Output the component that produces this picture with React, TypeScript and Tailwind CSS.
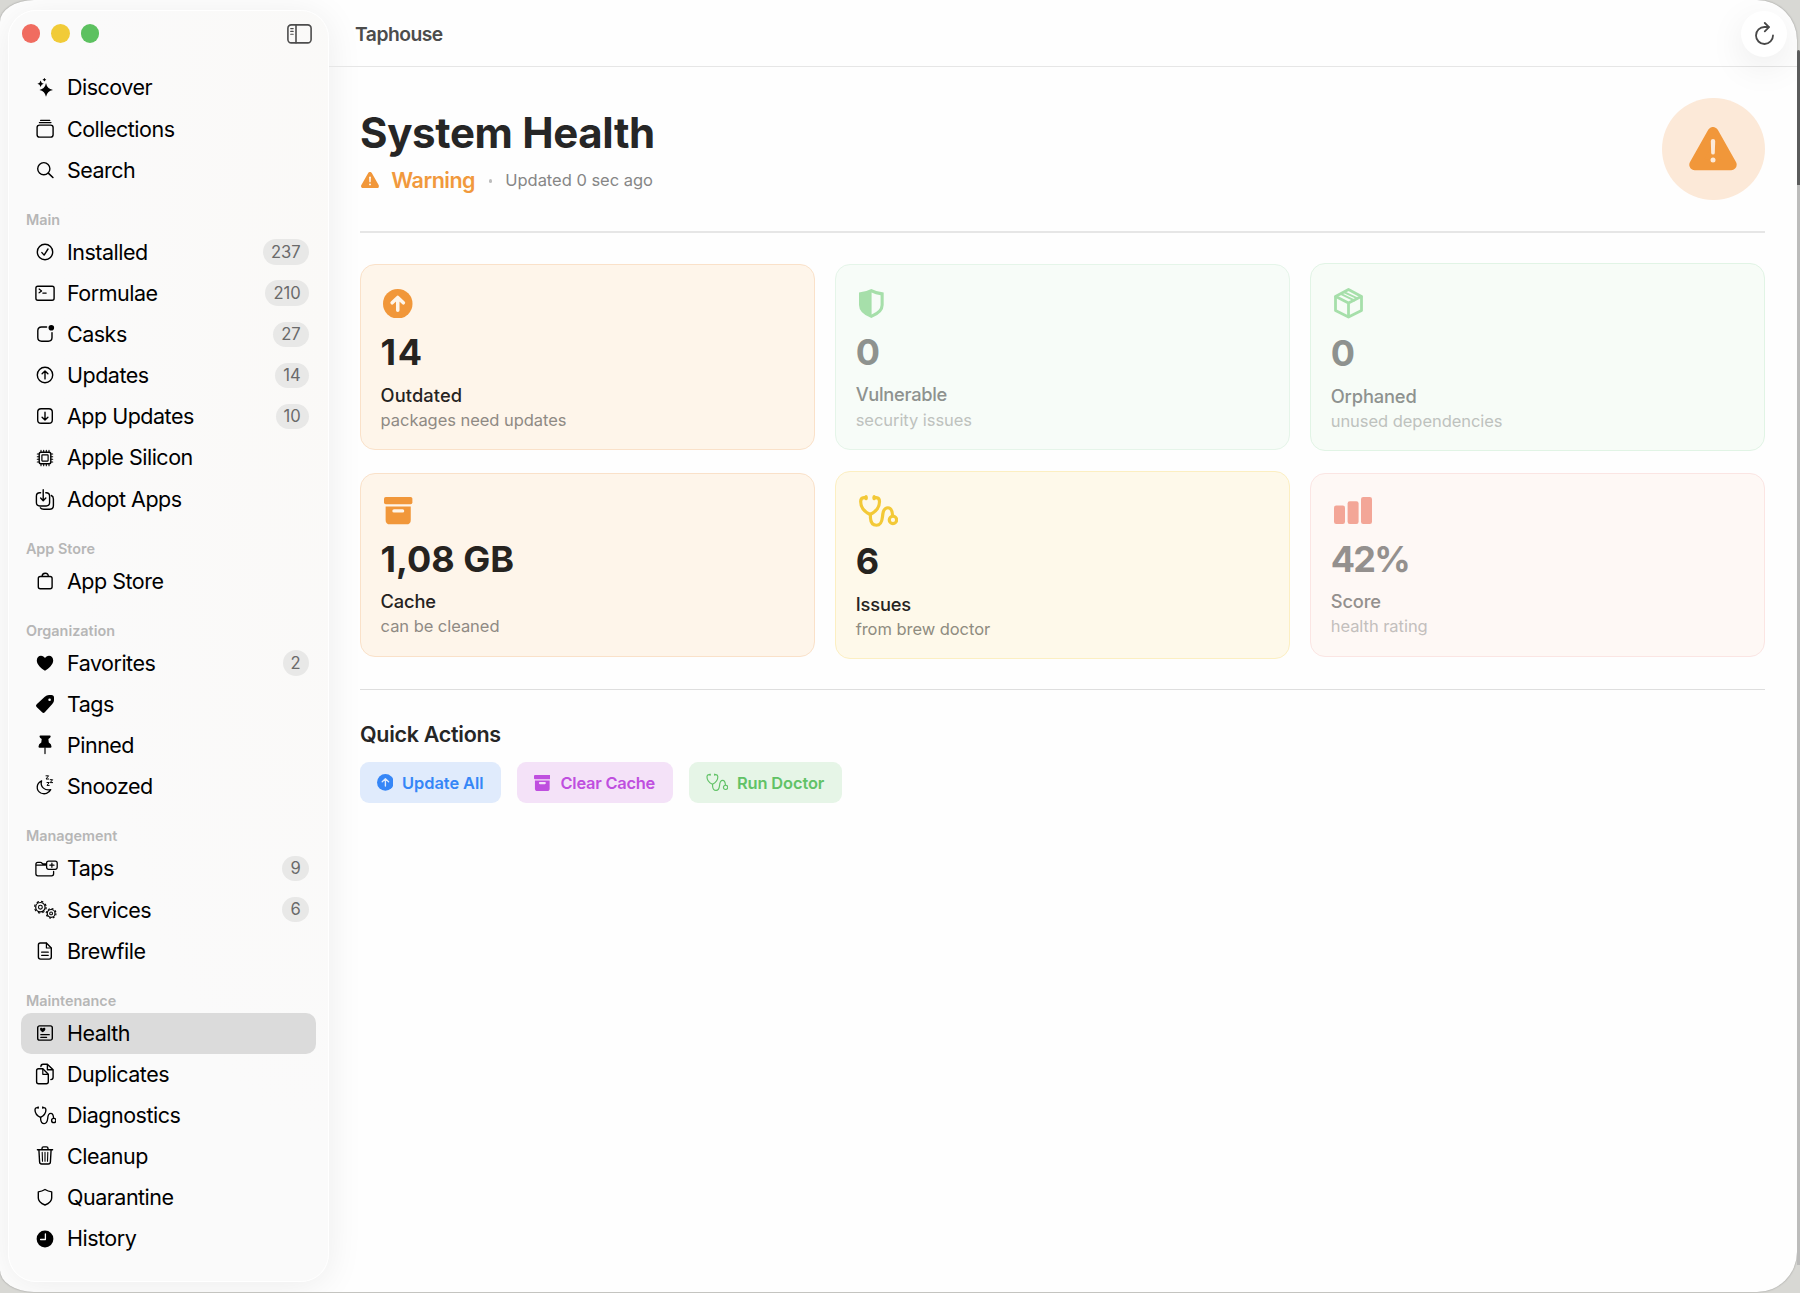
import type { ReactNode } from 'react';

interface NavItem {
  label: string;
  icon: ReactNode;
  count?: number;
}

interface NavSection {
  title?: string;
  items: NavItem[];
}

interface StatCard {
  value: string;
  label: string;
  hint: string;
  icon: ReactNode;
  card: string;
  valueClass: string;
  labelClass: string;
  hintClass: string;
}

// ── Icons ───────────────────────────────────────────────────────────────────
// Sidebar glyphs share one 24px box with the origin in the middle.
function Glyph({ children }: { children: ReactNode }) {
  return (
    <svg
      width="24" height="24" viewBox="-12 -12 24 24" className="shrink-0 overflow-visible"
      fill="none" stroke="currentColor" strokeWidth="1.4" strokeLinecap="round" strokeLinejoin="round"
    >
      {children}
    </svg>
  );
}

function Stethoscope({ className, stroke }: { className: string; stroke: number }) {
  return (
    <svg viewBox="0 0 116 95" className={className} fill="none" stroke="currentColor" strokeWidth={stroke} strokeLinecap="round" strokeLinejoin="round">
      <path d="M21 8H15Q5 9 5 19C5 37 18 51 33 58C48 51 61 37 61 19Q61 9 51 8H45" />
      <path d="M34 58V68C35 82 42 90 52 90C64 90 68 82 70 64C71 48 77 38 86 38C95 38 99 46 100 61" />
      <circle cx="101" cy="74" r="11" />
      <path d="M21 5V11M45 5V11" />
    </svg>
  );
}

function WarningTriangle({ className, mark }: { className: string; mark: string }) {
  return (
    <svg viewBox="0 0 48 43.5" className={className}>
      <path d="M24 5.5L5.8 37.7H42.2Z" fill="#f1973a" stroke="#f1973a" strokeWidth="11" strokeLinejoin="round" />
      <path d="M21.8 14Q21.8 12 24 12T26.2 14L25.8 26Q25.7 27.6 24 27.6T22.2 26Z" fill={mark} />
      <circle cx="24" cy="33" r="2.5" fill={mark} />
    </svg>
  );
}

function ArrowUpDisc({ className, arrow, stroke }: { className: string; arrow: string; stroke: number }) {
  return (
    <svg viewBox="0 0 30 30" className={className}>
      <circle cx="15" cy="15" r="15" fill="currentColor" />
      <path d="M15 21.5V9M9.3 14L15 8.6L20.7 14" fill="none" stroke={arrow} strokeWidth={stroke} strokeLinecap="round" strokeLinejoin="round" />
    </svg>
  );
}

function ArchiveBox({ className, slot }: { className: string; slot: string }) {
  return (
    <svg viewBox="0 0 28 27" className={className} fill="currentColor">
      <rect width="28" height="7.2" rx="1.8" />
      <path d="M1.6 9.4H26.4V22.6Q26.4 27 22 27H6Q1.6 27 1.6 22.6Z" />
      <rect x="8.2" y="12" width="11.8" height="3.4" rx="1.7" fill={slot} />
    </svg>
  );
}

const I = {
  discover: (
    <Glyph>
      <g fill="currentColor" stroke="none">
        <path d="M1-5Q2 .8 8 1.9Q2 3 1 8.8Q0 3-5.6 1.9Q0 .8 1-5Z" />
        <path d="M-4.4-7.6Q-3.9-4.8-1.2-4.3Q-3.9-3.8-4.4-1Q-4.9-3.8-7.6-4.3Q-4.9-4.8-4.4-7.6Z" />
        <path d="M-.6-10.2Q-.3-8.6 1.3-8.3Q-.3-8-.6-6.4Q-.9-8-2.5-8.3Q-.9-8.6-.6-10.2Z" />
      </g>
    </Glyph>
  ),
  collections: (
    <Glyph>
      <rect x="-7.9" y="-3.9" width="16" height="12" rx="2.4" />
      <path d="M-5.6-6.4H6M-4.4-8.6H4.8" strokeWidth="1.2" />
    </Glyph>
  ),
  search: <Glyph><circle cx="-1.2" cy="-1.3" r="6.1" /><path d="M3.3 3.2L7.9 7.5" strokeWidth="1.6" /></Glyph>,
  installed: <Glyph><circle r="7.7" /><path d="M-3.1.6L-.9 3.1L3-3" /></Glyph>,
  formulae: (
    <Glyph>
      <rect x="-9.1" y="-6.8" width="18.2" height="14" rx="1.9" />
      <path d="M-5.9-4L-3.4-2.1L-5.9-.2M-2.2.1H1.2" strokeWidth="1.2" />
    </Glyph>
  ),
  casks: (
    <Glyph>
      <path d="M1.6-7H-3.4Q-7.2-7-7.2-3.2V3.5Q-7.2 7.2-3.4 7.2H3.3Q7 7.2 7 3.5V-1.4" />
      <circle cx="6.3" cy="-6.3" r="2.8" fill="currentColor" stroke="none" />
    </Glyph>
  ),
  updates: <Glyph><circle r="7.7" /><path d="M0 3.9V-3.8M-2.9-1.2L0-4L2.9-1.2" /></Glyph>,
  appUpdates: <Glyph><rect x="-7.3" y="-7.3" width="14.6" height="14.6" rx="3.4" /><path d="M0-3.8V3.8M-2.9 1.2L0 4L2.9 1.2" /></Glyph>,
  silicon: (
    <Glyph>
      <rect x="-5.8" y="-5.8" width="11.6" height="11.6" rx="1.8" />
      <rect x="-3.1" y="-3.1" width="6.2" height="6.2" rx=".5" strokeWidth="1.2" />
      <path
        d="M-4-6V-7.7M-1.3-6V-7.7M1.3-6V-7.7M4-6V-7.7M-4 6V7.7M-1.3 6V7.7M1.3 6V7.7M4 6V7.7M-6-4H-7.7M-6-1.3H-7.7M-6 1.3H-7.7M-6 4H-7.7M6-4H7.7M6-1.3H7.7M6 1.3H7.7M6 4H7.7"
        strokeWidth="1.1"
      />
    </Glyph>
  ),
  adopt: (
    <Glyph>
      <path d="M-4.4-6.2H-5.2Q-8.6-6.2-8.6-2.8V3.6Q-8.6 7-5.2 7H1.2Q4.6 7 4.6 3.6V-2.8Q4.6-6.2 1.2-6.2H.8" />
      <path d="M-1.8-9.3V1.4M-4.4-.9L-1.8 1.7L.8-.9" />
      <path d="M6.3-3.5Q8.4-2.6 8.4 0V6.6Q8.4 10.2 4.8 10.2H-1.2Q-3.6 10.2-4.6 8.8" />
    </Glyph>
  ),
  store: (
    <Glyph>
      <rect x="-6.7" y="-4.5" width="13.8" height="12.3" rx="2" />
      <path d="M-2.9-4.6Q-2.9-7.8.2-7.8T3.3-4.6" />
    </Glyph>
  ),
  heart: (
    <Glyph>
      <path
        d="M0 7.8C-4 5-8.2 1.5-8.2-2.6C-8.2-5.4-6.3-7.3-4-7.3C-2.2-7.3-.8-6.3 0-4.9C.8-6.3 2.2-7.3 4-7.3C6.3-7.3 8.2-5.4 8.2-2.6C8.2 1.5 4 5 0 7.8Z"
        fill="currentColor" stroke="none"
      />
    </Glyph>
  ),
  tag: (
    <Glyph>
      <path
        d="M-.2-7.2Q1.6-9 4-9H6.4Q9-8.9 9-6.4V-3.8Q9-1.6 7.3 0L-.2 8.2Q-1.5 9.5-2.9 8.3L-8.4 3Q-9.8 1.7-8.3.3ZM4.6-5.6A1.3 1.3 0 1 0 4.6-3A1.3 1.3 0 1 0 4.6-5.6Z"
        fill="currentColor" fillRule="evenodd" stroke="none"
      />
    </Glyph>
  ),
  pin: (
    <Glyph>
      <path d="M-4.6-9.4H4.8Q5.7-9.4 5.7-8.5Q5.6-7.2 3.4-6.1L3.8-2.4Q6.5-.9 6.5 1.6Q6.5 2.8 5.4 2.8H-5.4Q-6.5 2.8-6.5 1.6Q-6.5-.9-3.7-2.4L-3.3-6.1Q-5.5-7.2-5.5-8.5Q-5.5-9.4-4.6-9.4Z" fill="currentColor" stroke="none" />
      <path d="M0 2.8V8.6" strokeWidth="1.2" />
    </Glyph>
  ),
  snooze: (
    <Glyph>
      <path d="M-3.4-5.2C-9-2.6-9.2 4.4-4.2 7C-.4 8.8 4 7.2 5.7 3.6C.4 5-5.4 1.2-3.4-5.2Z" strokeWidth="1.3" />
      <path d="M1-10.2H3.6L1-7H3.6M5.2-6.3H7.6L5.2-3.4H7.6M2-3.5H4.2L2-.6H4.2" strokeWidth="1" />
    </Glyph>
  ),
  taps: (
    <Glyph>
      <path d="M1-3.8H-9M.8-5.2H-2.4L-3.8-6.4Q-4.2-6.7-4.8-6.7H-7.1Q-9.1-6.7-9.1-4.7V4.8Q-9.1 6.8-7.1 6.8H6.6Q8.6 6.8 8.6 4.8V2.4" strokeWidth="1.3" />
      <rect x="1.6" y="-7.9" width="10.6" height="8.2" rx="2" strokeWidth="1.3" />
      <path d="M6.9-5.9V-1.7M4.8-3.8H9" strokeWidth="1.2" />
    </Glyph>
  ),
  services: (
    <Glyph>
      <g strokeLinecap="butt">
        <circle cx="-4.6" cy="-2.8" r="4.7" strokeWidth="1.2" />
        <circle cx="-4.6" cy="-2.8" r="5.8" strokeWidth="1.2" strokeDasharray="2.28 2.28" />
        <circle cx="-4.6" cy="-2.8" r="1.9" strokeWidth="1.1" />
        <circle cx="6.1" cy="3.4" r="3.9" strokeWidth="1.2" />
        <circle cx="6.1" cy="3.4" r="4.9" strokeWidth="1.1" strokeDasharray="1.92 1.92" />
        <circle cx="6.1" cy="3.4" r="1.4" strokeWidth="1.1" />
      </g>
    </Glyph>
  ),
  brewfile: (
    <Glyph>
      <path d="M-4.7-8H1.4L6.3-3.1V6Q6.3 8.1 4.2 8.1H-4.4Q-6.6 8.1-6.6 6V-6Q-6.6-8-4.7-8Z" />
      <path d="M1.4-7.8V-3H6.1M-3.4 1.2H3.3M-3.4 4.3H3.3" strokeWidth="1.2" />
    </Glyph>
  ),
  health: (
    <Glyph>
      <rect x="-7.3" y="-7.1" width="14.6" height="14.2" rx="1.9" />
      <path d="M-2.3-.7C-4-1.8-5-2.9-5-4C-5-5.5-3-5.8-2.3-4.5C-1.6-5.8.4-5.5.4-4C.4-2.9-.6-1.8-2.3-.7Z" fill="currentColor" stroke="none" />
      <path d="M-4.2 1.7H4.3M-4.2 4.4H1.6" strokeWidth="1.2" />
    </Glyph>
  ),
  duplicates: (
    <Glyph>
      <path d="M-6.5-5.2H-2.2L3.3.2V7.8Q3.3 9.8 1.3 9.8H-6.4Q-8.4 9.8-8.4 7.8V-3.2Q-8.4-5.2-6.5-5.2Z" />
      <path d="M-2.2-5V.3H3.1" strokeWidth="1.2" />
      <path d="M-4.1-7.4Q-4.1-9.8-1.9-9.8H2.4L8.1-4.3V3.2Q8.1 5.6 5.8 5.6M2.4-9.6V-4.3H7.9" />
    </Glyph>
  ),
  trash: (
    <Glyph>
      <path d="M-7.6-6.3H7.6M-3-6.5V-7.6Q-3-9.1-1.5-9.1H1.5Q3-9.1 3-7.6V-6.5M-6.1-6.2L-5.4 6Q-5.3 8-3.3 8H3.3Q5.3 8 5.4 6L6.1-6.2" />
      <path d="M-2.8-3.6L-2.5 5.2M0-3.6V5.2M2.8-3.6L2.5 5.2" strokeWidth="1.1" />
    </Glyph>
  ),
  shield: <Glyph><path d="M0-7.5Q3-5.6 6.7-5.1V1Q6.7 5.4 0 8Q-6.7 5.4-6.7 1V-5.1Q-3-5.6 0-7.5Z" /></Glyph>,
  history: (
    <Glyph>
      <circle r="8.4" fill="currentColor" stroke="none" />
      <path d="M.4-5V.5H-4.4" stroke="#fafafa" strokeWidth="1.3" />
    </Glyph>
  ),
};

// ── Data ────────────────────────────────────────────────────────────────────
const SECTIONS: NavSection[] = [
  {
    items: [
      { label: 'Discover', icon: I.discover },
      { label: 'Collections', icon: I.collections },
      { label: 'Search', icon: I.search },
    ],
  },
  {
    title: 'Main',
    items: [
      { label: 'Installed', icon: I.installed, count: 237 },
      { label: 'Formulae', icon: I.formulae, count: 210 },
      { label: 'Casks', icon: I.casks, count: 27 },
      { label: 'Updates', icon: I.updates, count: 14 },
      { label: 'App Updates', icon: I.appUpdates, count: 10 },
      { label: 'Apple Silicon', icon: I.silicon },
      { label: 'Adopt Apps', icon: I.adopt },
    ],
  },
  { title: 'App Store', items: [{ label: 'App Store', icon: I.store }] },
  {
    title: 'Organization',
    items: [
      { label: 'Favorites', icon: I.heart, count: 2 },
      { label: 'Tags', icon: I.tag },
      { label: 'Pinned', icon: I.pin },
      { label: 'Snoozed', icon: I.snooze },
    ],
  },
  {
    title: 'Management',
    items: [
      { label: 'Taps', icon: I.taps, count: 9 },
      { label: 'Services', icon: I.services, count: 6 },
      { label: 'Brewfile', icon: I.brewfile },
    ],
  },
  {
    title: 'Maintenance',
    items: [
      { label: 'Health', icon: I.health },
      { label: 'Duplicates', icon: I.duplicates },
      { label: 'Diagnostics', icon: <Stethoscope className="w-[22.7px] shrink-0" stroke={7} /> },
      { label: 'Cleanup', icon: I.trash },
      { label: 'Quarantine', icon: I.shield },
      { label: 'History', icon: I.history },
    ],
  },
];

const CARDS: StatCard[] = [
  {
    value: '14', label: 'Outdated', hint: 'packages need updates',
    icon: <ArrowUpDisc className="-ml-px w-[29.5px] text-[#f1973a]" arrow="#fef5ea" stroke={3.6} />,
    card: 'h-[186px] bg-[#fef5ea] border-[#fae1c9]',
    valueClass: 'text-[#26231f] tracking-[1.6px]', labelClass: 'text-[#26231f] tracking-[0.1px]', hintClass: 'text-[#8f8a84]',
  },
  {
    value: '0', label: 'Vulnerable', hint: 'security issues',
    icon: (
      <svg viewBox="0 0 24.7 29" className="w-[24.7px]">
        <path d="M12.35 0Q18 3 24.7 3.4V16Q24.7 24.4 12.35 29Q0 24.4 0 16V3.4Q6.7 3 12.35 0Z" fill="#a6dfaa" />
        <path d="M12.6 3.6Q16.6 5.8 21.6 6.2V16Q21.6 21.8 12.6 25.4Z" fill="#f7fcf8" />
      </svg>
    ),
    card: 'h-[185.4px] bg-[#f7fcf8] border-[#e5f5e9]',
    valueClass: 'text-[#8e928f]', labelClass: 'text-[#8e928f] tracking-[-0.3px]', hintClass: 'text-[#bec2be]',
  },
  {
    value: '0', label: 'Orphaned', hint: 'unused dependencies',
    icon: (
      <svg viewBox="0 0 29 30.5" className="w-[29px]" fill="none" stroke="#a6dfaa" strokeWidth="2.8" strokeLinejoin="round" strokeLinecap="round">
        <path d="M14.5 1.5L27.5 8.4V22.4L14.5 29L1.5 22.4V8.4Z" />
        <path d="M1.8 8.6L14.5 15L27.2 8.6M14.5 15V28.6" />
        <path d="M7.2 6.1L20.2 12.4M10.5 4.3L23.4 10.4" strokeWidth="2" />
      </svg>
    ),
    card: 'h-[188px] bg-[#f7fcf7] border-[#e1f4e5]',
    valueClass: 'text-[#8e928f]', labelClass: 'text-[#8e928f] tracking-[-0.15px]', hintClass: 'text-[#bec2be]',
  },
  {
    value: '1,08 GB', label: 'Cache', hint: 'can be cleaned',
    icon: <ArchiveBox className="w-[28.4px] text-[#f1973a]" slot="#fef5ea" />,
    card: 'h-[183.6px] bg-[#fef5ea] border-[#fae1c9]',
    valueClass: 'text-[#26231f]', labelClass: 'text-[#26231f] tracking-[-0.15px]', hintClass: 'text-[#8f8a84]',
  },
  {
    value: '6', label: 'Issues', hint: 'from brew doctor',
    icon: <Stethoscope className="w-[39px] text-[#f3c937]" stroke={9.5} />,
    card: 'h-[188.5px] bg-[#fef9ea] border-[#fcefc2]',
    valueClass: 'text-[#26241f]', labelClass: 'text-[#26241f] tracking-[-0.15px]', hintClass: 'text-[#8f8c80]',
  },
  {
    value: '42%', label: 'Score', hint: 'health rating',
    icon: (
      <svg viewBox="0 0 38 27" className="w-[38px]" fill="#f3a697">
        <rect y="8.4" width="11" height="18.6" rx="2.2" />
        <rect x="13.6" y="4.2" width="11" height="22.8" rx="2.2" />
        <rect x="27" width="11" height="27" rx="2.2" />
      </svg>
    ),
    card: 'h-[183.6px] bg-[#fef8f5] border-[#fbe5e3]',
    valueClass: 'text-[#94908e] tracking-[-1.8px]', labelClass: 'text-[#94908e] tracking-[-0.15px]', hintClass: 'text-[#c3bfbd]',
  },
];

// ── Sidebar ─────────────────────────────────────────────────────────────────
function NavRow({ item, active }: { item: NavItem; active: boolean }) {
  return (
    <div className={`flex h-[41.12px] items-center rounded-[10px] pl-[7.3px] pr-[7.6px] ${active ? 'bg-[#dbdbdb]' : ''}`}>
      <span className="flex w-[34px] shrink-0 justify-center">{item.icon}</span>
      <span className="ml-[5px] flex-1 whitespace-nowrap text-[21.5px] tracking-[-0.5px]">{item.label}</span>
      {item.count !== undefined && (
        <span className="flex h-[25.4px] min-w-[25.6px] items-center justify-center rounded-full bg-[#e8e8e7] px-[8px] text-[16.6px] text-[#6a6a6a]">
          {item.count}
        </span>
      )}
    </div>
  );
}

function Sidebar() {
  return (
    <aside className="mb-[10px] ml-2 mt-[10px] flex w-[321px] shrink-0 flex-col rounded-[28px] border border-white bg-[radial-gradient(ellipse_at_100%_25%,#faf9f7,#fafafa_60%)] px-[11.7px] text-black shadow-[0_4px_36px_rgba(0,0,0,0.075)]">
      <div className="mb-[10.8px] flex h-[45.2px] shrink-0 items-center gap-[11.3px] pl-[1px] pr-[4px]">
        <span className="size-[18.4px] rounded-full bg-[#f06c60]" />
        <span className="size-[18.4px] rounded-full bg-[#f1cb38]" />
        <span className="size-[18.4px] rounded-full bg-[#5cc160]" />
        <svg viewBox="0 0 25 20" className="ml-auto w-[25px] text-[#4d4d4d]" fill="none" stroke="currentColor" strokeWidth="1.6" strokeLinecap="round">
          <rect x=".9" y=".9" width="23.2" height="18" rx="3.4" />
          <path d="M9 1V18.8" />
          <path d="M3.7 4.6H6.2M3.7 7.4H6.2M3.7 10.2H6.2" strokeWidth="1.1" />
        </svg>
      </div>
      {SECTIONS.map((section, i) => (
        <div key={i} className="flex flex-col">
          {section.title && (
            <div className="flex h-[41.12px] items-center pl-[5.2px] pt-[17.3px] text-[14.4px] font-semibold text-[#b6b6b6]">
              {section.title}
            </div>
          )}
          {section.items.map(item => (
            <NavRow key={item.label} item={item} active={item.label === 'Health'} />
          ))}
        </div>
      ))}
    </aside>
  );
}

// ── Main pane ───────────────────────────────────────────────────────────────
function Card({ data }: { data: StatCard }) {
  return (
    <div className={`flex flex-col rounded-[15px] border px-[19.6px] pb-[18.2px] pt-[10px] ${data.card}`}>
      <div className="flex flex-1 items-center pl-[3.6px]">{data.icon}</div>
      <div className={`text-[36px] font-bold leading-[43px] ${data.valueClass}`}>{data.value}</div>
      <div className={`mt-[8.4px] text-[18.3px] font-medium leading-6 ${data.labelClass}`}>{data.label}</div>
      <div className={`mt-[2.2px] text-[16.5px] leading-[22px] tracking-[-0.05px] ${data.hintClass}`}>{data.hint}</div>
    </div>
  );
}

export default function App() {
  return (
    <div className="flex h-[1293px] w-[1800px] overflow-hidden bg-[#d8d8d4] font-['Inter','Liberation_Sans',sans-serif]">
      <div className="flex h-[1292px] w-[1797px] shrink-0 overflow-hidden rounded-r-[40px] rounded-bl-[34px_22px] rounded-tl-[34px_22px] bg-[#fefefe] shadow-[0_0_2px_rgba(0,0,0,0.35)]">
        <Sidebar />

        <main className="flex flex-1 flex-col">
          <header className="flex h-[67px] shrink-0 items-center border-b border-[#e6e6e6] pl-[26px] pr-[10px]">
            <span className="pt-[2px] text-[19.3px] font-semibold tracking-[-0.5px] text-[#4c4c4c]">Taphouse</span>
            <span className="ml-auto mt-[1px] flex size-[46px] items-center justify-center rounded-full bg-white shadow-[0_10px_36px_rgba(0,0,0,0.08)]">
              <svg viewBox="0 0 19 23" className="w-[19px]" fill="none" stroke="#484848" strokeWidth="1.8" strokeLinecap="round" strokeLinejoin="round">
                <path d="M18 13.4A8.5 8.5 0 1 1 9.6 5H13.6" />
                <path d="M9.8 1L14 5.1L9.8 9.3" />
              </svg>
            </span>
          </header>

          <div className="flex flex-col pl-[31px] pr-[32.3px] pt-[30.7px]">
            <div className="flex h-[102.5px] justify-between">
              <div className="pt-[11.6px]">
                <h1 className="text-[42px] font-bold leading-[48px] tracking-[-0.35px] text-[#262626]">System Health</h1>
                <div className="mt-[8.7px] flex h-7 items-center">
                  <WarningTriangle className="ml-[1px] w-[18px]" mark="#fefefe" />
                  <span className="ml-[12.3px] text-[21.5px] font-semibold tracking-[-0.5px] text-[#f1993d]">Warning</span>
                  <span className="ml-[13.6px] mt-[2px] size-[3.6px] rounded-full bg-[#bdbdbd]" />
                  <span className="ml-[13px] pt-[1px] text-[16.5px] tracking-[-0.02px] text-[#868686]">Updated 0 sec ago</span>
                </div>
              </div>
              <div className="flex size-[102.5px] items-center justify-center rounded-full bg-[#fce9d8]">
                <WarningTriangle className="w-12" mark="#fce9d8" />
              </div>
            </div>

            <div className="mt-[31px] h-[1.4px] bg-[#e6e6e6]" />

            <div className="mt-[30.6px] grid grid-cols-3 grid-rows-[188px_188.5px] items-center gap-x-[20.5px] gap-y-[19.4px]">
              {CARDS.map(card => <Card key={card.label} data={card} />)}
            </div>

            <div className="mt-[30px] h-px bg-[#dedede]" />

            <h2 className="mt-[30px] text-[21.5px] font-semibold leading-7 tracking-[-0.3px] text-[#262626]">Quick Actions</h2>
            <div className="mt-[14.3px] flex gap-[15.6px] text-[16.4px] font-semibold">
              <div className="flex h-[40.7px] w-[141.3px] items-center rounded-[9px] bg-[#e0ebfc] pl-[16.5px] text-[#3586f7]">
                <ArrowUpDisc className="w-[16.8px]" arrow="#e0ebfc" stroke={2.4} />
                <span className="ml-[8.8px] pt-[1px] tracking-[-0.05px]">Update All</span>
              </div>
              <div className="flex h-[40.7px] w-[156.3px] items-center rounded-[9px] bg-[#f4e2f8] pl-[17px] text-[#bf4fdf]">
                <ArchiveBox className="w-[16.6px]" slot="#f4e2f8" />
                <span className="ml-[10px] pt-[1px] tracking-[-0.22px]">Clear Cache</span>
              </div>
              <div className="flex h-[40.7px] w-[153.4px] items-center rounded-[9px] bg-[#e6f5e7] pl-[17px] text-[#61c266]">
                <Stethoscope className="w-[22.5px]" stroke={6} />
                <span className="ml-[8.6px] pt-[1px] tracking-[-0.1px]">Run Doctor</span>
              </div>
            </div>
          </div>
        </main>
      </div>

      {/* Edge of the window behind */}
      <div className="flex w-[3px] shrink-0 flex-col">
        <div className="h-[50px]" />
        <div className="h-[135px] rounded-t-sm bg-[#5b5c5c]" />
        <div className="h-[1080px] bg-[#bcbcbb]" />
      </div>
    </div>
  );
}
